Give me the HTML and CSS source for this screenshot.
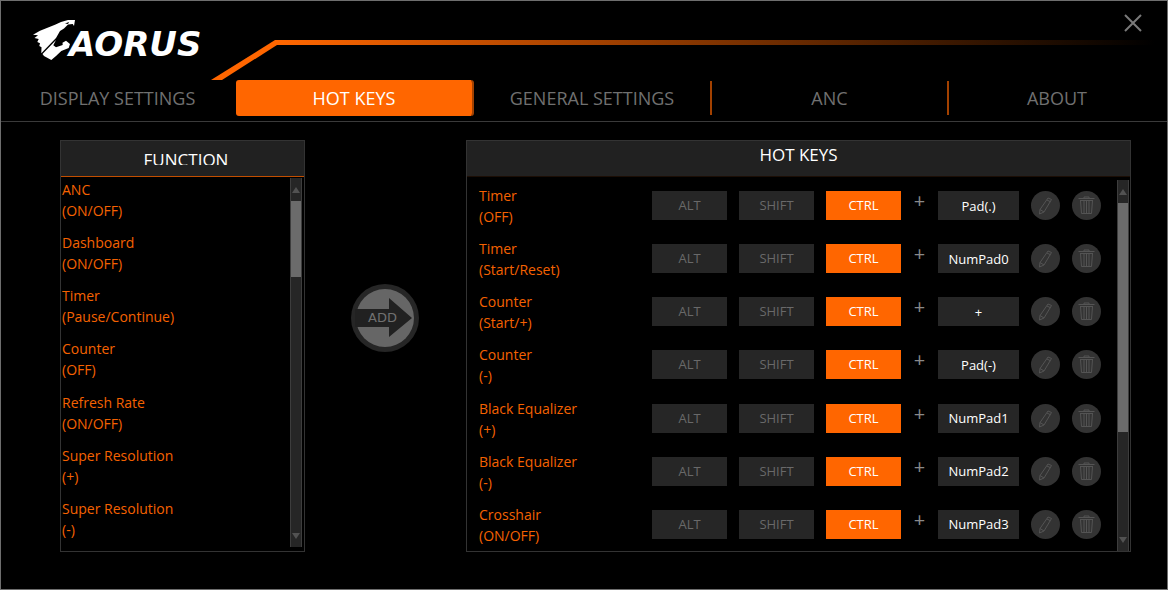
FILE: index.html
```html
<!DOCTYPE html>
<html lang="en">
<head>
  <meta charset="UTF-8">
  <title>AORUS - Hot Keys</title>
  <link rel="stylesheet" href="styles.css">
</head>
<body>
  <svg class="symbols" aria-hidden="true">
    <symbol id="icon-edit" viewBox="0 0 29 29">
      <path d="M17 7 L20.500 8.500 L13 21 L8.500 23 L9 18.500 Z M16 9 L19.500 10.800 M9 18.500 L13 21"/>
    </symbol>
    <symbol id="icon-trash" viewBox="0 0 29 29">
      <path d="M6.500 7.500 H22.500 M12 7 V6 H17 V7 M8 9.500 H21 M8.500 9.500 L9.500 22.500 H19.500 L20.500 9.500 M12 10 V22 M14.500 10 V22 M17 10 V22"/>
    </symbol>
  </svg>

  <div class="window">
    <header class="header">
      <div class="logo">
        <svg class="logo-mark" viewBox="0 0 44 42" aria-hidden="true">
          <path d="M42 1 L35 1 L28 3 L22 5.700 L7 11.700 L0 15.700 L5 16.300 L1.500 19 L5.700 20 L4.300 23 L7 24.300 L6.300 27 L8.500 28.300 L8.300 34.300 L23 19 L27 12 L31 9.500 L35 5.500 L39.700 5 L41 7 Z M32 4.500 L36 3 L35 5 Z" fill-rule="evenodd"/>
          <path d="M9.500 35 L23 21 L20.300 26.300 L23 28.300 L29.700 26 L29.500 23.700 L33 21.700 L37 25 L35.700 29 L28.300 32 L23 37 L18.300 41 L11 37 Z"/>
        </svg>
        <span class="logo-text">AORUS</span>
      </div>
      <svg class="slope" viewBox="0 0 66 40" aria-hidden="true">
        <polygon points="0,40 64,0 66,0 66,5 11,40"/>
      </svg>
      <div class="line"></div>
      <button class="close" aria-label="Close">
        <svg viewBox="0 0 18 18"><path d="M1 1 L17 17 M17 1 L1 17"/></svg>
      </button>
    </header>

    <nav class="tabs">
      <a href="#display">DISPLAY SETTINGS</a>
      <a href="#hotkeys" class="active">HOT KEYS</a>
      <a href="#general">GENERAL SETTINGS</a>
      <a href="#anc">ANC</a>
      <a href="#about">ABOUT</a>
    </nav>

    <main class="content">
      <section class="panel functions">
        <div class="panel-header"><h2>FUNCTION</h2></div>
        <div class="panel-body">
          <ul class="function-list" id="functionList"></ul>
          <div class="scrollbar"><span class="up"></span><div class="rail"><div class="thumb"></div></div><span class="down"></span></div>
        </div>
      </section>

      <button class="add">
        <svg viewBox="0 0 68 68" aria-hidden="true">
          <circle class="ring" cx="34" cy="34" r="34"/>
          <circle class="disc" cx="34" cy="34" r="29"/>
          <polygon class="arrow" points="4,25 38,25 38,14 61,34 38,53 38,43 4,43"/>
        </svg>
        <span>ADD</span>
      </button>

      <section class="panel hotkeys">
        <div class="panel-header"><h2>HOT KEYS</h2></div>
        <div class="panel-body">
          <ul class="hotkey-list" id="hotkeyList"></ul>
          <div class="scrollbar"><span class="up"></span><div class="rail"><div class="thumb"></div></div><span class="down"></span></div>
        </div>
      </section>
    </main>
  </div>

  <script>
    const functions = [
      ["ANC", "(ON/OFF)"],
      ["Dashboard", "(ON/OFF)"],
      ["Timer", "(Pause/Continue)"],
      ["Counter", "(OFF)"],
      ["Refresh Rate", "(ON/OFF)"],
      ["Super Resolution", "(+)"],
      ["Super Resolution", "(-)"]
    ];

    const hotkeys = [
      ["Timer", "(OFF)", "Pad(.)"],
      ["Timer", "(Start/Reset)", "NumPad0"],
      ["Counter", "(Start/+)", "+"],
      ["Counter", "(-)", "Pad(-)"],
      ["Black Equalizer", "(+)", "NumPad1"],
      ["Black Equalizer", "(-)", "NumPad2"],
      ["Crosshair", "(ON/OFF)", "NumPad3"]
    ];

    document.getElementById("functionList").innerHTML = functions.map(([name, action]) =>
      `<li>${name}<br>${action}</li>`
    ).join("");

    document.getElementById("hotkeyList").innerHTML = hotkeys.map(([name, action, key], i) => `
      <li>
        <label for="key${i}">${name}<br>${action}</label>
        <button class="key" aria-pressed="false">ALT</button>
        <button class="key" aria-pressed="false">SHIFT</button>
        <button class="key on" aria-pressed="true">CTRL</button>
        <span class="plus">+</span>
        <input class="key-input" id="key${i}" type="text" value="${key}" readonly>
        <button class="round" aria-label="Edit"><svg><use href="#icon-edit"/></svg></button>
        <button class="round" aria-label="Delete"><svg><use href="#icon-trash"/></svg></button>
      </li>`
    ).join("");

    document.querySelectorAll(".key").forEach(button => {
      button.addEventListener("click", () => {
        const on = button.classList.toggle("on");
        button.setAttribute("aria-pressed", on);
      });
    });
  </script>
</body>
</html>
```

FILE: styles.css
```css
:root {
  --orange: #ff6600;
  --panel: #212121;
  --border: #333333;
}

* {
  box-sizing: border-box;
}

body {
  margin: 0;
  background: #000;
  color: #fff;
  font-family: "Segoe UI", "Open Sans", "Noto Sans", sans-serif;
  font-size: 14px;
}

button,
input {
  font: inherit;
  border: none;
  padding: 0;
}

button {
  cursor: pointer;
}

ul {
  list-style: none;
  margin: 0;
  padding: 0;
}

.symbols {
  position: absolute;
  width: 0;
  height: 0;
}

.window {
  min-height: 100vh;
  border: 1px solid #6e6e6e;
}

/* header */

.header {
  position: relative;
  display: flex;
  align-items: flex-start;
  height: 79px;
}

.logo {
  display: flex;
  width: 210px;
  padding: 18px 0 0 32px;
}

.logo-mark {
  flex: none;
  width: 44px;
  height: 42px;
  fill: #fff;
}

.logo-text {
  margin: 7px 0 0 -8px;
  font: italic bold 34px/36px "DejaVu Sans", sans-serif;
}

.slope {
  flex: none;
  width: 66px;
  height: 40px;
  margin-top: 39px;
  fill: var(--orange);
}

.line {
  flex: 1;
  height: 5px;
  margin: 39px 12px 0 0;
  background: linear-gradient(to right, var(--orange), #000);
}

.close {
  position: absolute;
  top: 13px;
  right: 25px;
  width: 18px;
  height: 18px;
  background: none;
}

.close svg {
  display: block;
  stroke: #7a7a7a;
  stroke-width: 2;
}

/* tabs */

.tabs {
  display: grid;
  grid-template-columns: 235fr 238fr 238fr 237fr 218fr;
  height: 42px;
  padding-bottom: 5px;
  border-bottom: 1px solid #3a3a3a;
}

.tabs a {
  display: flex;
  align-items: center;
  justify-content: center;
  height: 36px;
  color: #707070;
  font-size: 18px;
  text-decoration: none;
  border-right: 2px solid transparent;
  border-image: linear-gradient(transparent 2px, #a34100 2px, #a34100 34px, transparent 34px) 1;
  border-image-width: 0 2px 0 0;
}

.tabs a:first-child,
.tabs a:last-child {
  border-image: none;
}

.tabs a.active {
  color: #fff;
  background: var(--orange);
  background-clip: padding-box;
  border-image: none;
  border-right-color: #a34100;
  border-radius: 3px;
}

/* panels */

.content {
  display: grid;
  grid-template-columns: 245fr 161fr 665fr;
  align-items: start;
  justify-items: center;
  padding: 18px 36px 36px 59px;
}

.panel {
  width: 100%;
  border: 1px solid var(--border);
}

.panel-header {
  height: 36px;
  background: var(--panel);
  border-bottom: 1px solid #1c0e05;
}

.panel-header h2 {
  margin: 0;
  font-size: 17px;
  font-weight: normal;
  line-height: 28px;
  text-align: center;
}

.functions .panel-header {
  padding-top: 5px;
  border-bottom: 1px solid #c24e00;
}

.functions .panel-header h2 {
  height: 19px;
  overflow: hidden;
  padding-left: 7px;
}

.panel-body {
  display: flex;
  height: 374px;
  overflow: hidden;
}

.function-list,
.hotkey-list {
  flex: 1;
  display: flex;
  flex-direction: column;
  justify-content: space-between;
  color: #f56200;
  line-height: 21px;
}

.function-list {
  padding: 2px 0 11px 1px;
}

.hotkey-list {
  padding: 8px 16px 5px 12px;
}

.hotkey-list li {
  display: grid;
  grid-template-columns: 1fr 75px 75px 75px 13px 81px 29px 29px;
  column-gap: 12px;
  align-items: start;
}

.key,
.key-input {
  width: 100%;
  height: 29px;
  margin-top: 6px;
  background: #262626;
  color: #696969;
  font-size: 13px;
  text-align: center;
}

.key.on {
  background: var(--orange);
  color: #fff;
}

.key-input {
  color: #fff;
}

.plus {
  margin-top: 5px;
  color: #8a8a8a;
  font-size: 20px;
  text-align: center;
}

.round {
  width: 29px;
  height: 29px;
  margin-top: 6px;
  border-radius: 50%;
  background: #333;
}

.round svg {
  display: block;
  width: 29px;
  height: 29px;
  fill: none;
  stroke: #545454;
}

/* scrollbars */

.scrollbar {
  display: flex;
  flex-direction: column;
  align-items: center;
  width: 12px;
  margin: 1px 2px 4px 0;
  background: #262626;
  border: 1px solid #3d3d3d;
  border-width: 0 1px;
}

.hotkeys .scrollbar {
  margin: 3px 1px 0 0;
}

.up,
.down {
  width: 8px;
  height: 6px;
  margin: 9px 0 8px;
  background: #525252;
  clip-path: polygon(50% 0, 100% 100%, 0 100%);
}

.down {
  margin: 2px 0 8px;
  clip-path: polygon(0 0, 100% 0, 50% 100%);
}

.rail {
  flex: 1;
  width: 100%;
}

.thumb {
  height: 23%;
  background: #6b6b6b;
}

.hotkeys .thumb {
  height: 69%;
}

/* add button */

.add {
  position: relative;
  width: 68px;
  height: 68px;
  margin: 144px 2px 0 0;
  background: none;
  color: #707070;
}

.add svg {
  display: block;
}

.add .ring {
  fill: #262626;
}

.add .disc {
  fill: #666;
}

.add .arrow {
  fill: #212121;
}

.add span {
  position: absolute;
  inset: 0;
  padding-right: 4px;
  font: 13px/68px "DejaVu Sans", sans-serif;
}
```
